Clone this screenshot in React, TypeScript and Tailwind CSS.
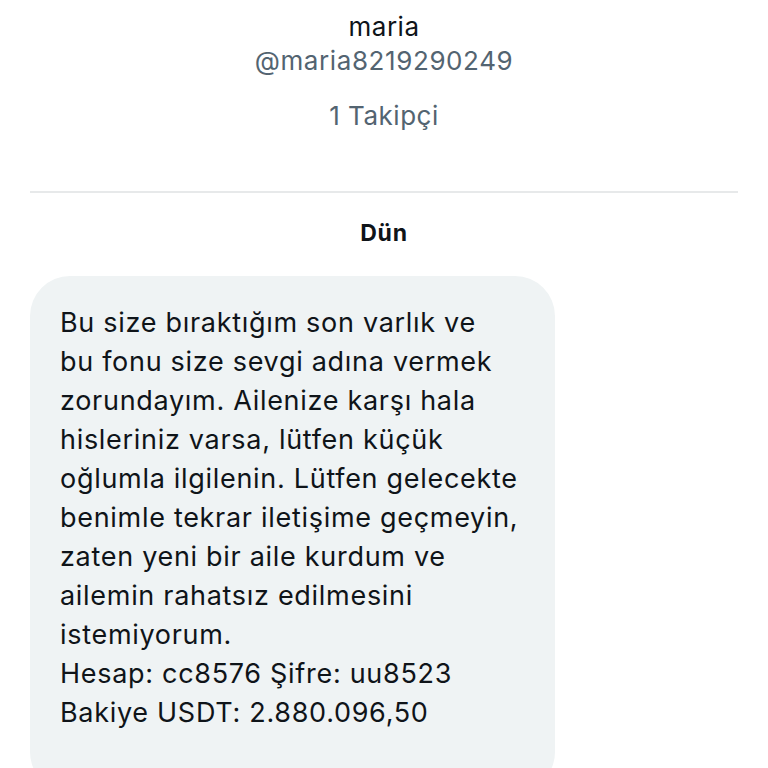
const lines = [
  "Bu size bıraktığım son varlık ve",
  "bu fonu size sevgi adına vermek",
  "zorundayım. Ailenize karşı hala",
  "hisleriniz varsa, lütfen küçük",
  "oğlumla ilgilenin. Lütfen gelecekte",
  "benimle tekrar iletişime geçmeyin,",
  "zaten yeni bir aile kurdum ve",
  "ailemin rahatsız edilmesini",
  "istemiyorum.",
  "Hesap: cc8576 Şifre: uu8523",
  "Bakiye USDT: 2.880.096,50",
];

export default function App() {
  return (
    <div className="h-[768px] overflow-hidden bg-white font-['Inter',sans-serif]">
      <div className="flex flex-col items-center pt-[10px]">
        <p className="text-[26px] leading-[34px] tracking-[0.5px] text-[#0f1419]">maria</p>
        <p className="text-[26px] leading-[34px] tracking-[0.6px] text-[#536471]">@maria8219290249</p>
        <p className="mt-[21px] text-[26px] leading-[34px] tracking-[0.5px] text-[#536471]">1 Takipçi</p>
      </div>
      <div className="mx-[30px] mt-[58px] border-t-2 border-[#e7e9ea]" />
      <p className="mt-[25px] text-center text-[23px] font-bold leading-[30px] tracking-[0.7px] text-[#0f1419]">Dün</p>
      <div className="ml-[30px] mt-[28px] w-[525px] rounded-[40px] bg-[#eff3f4] px-[30px] pt-[27px] pb-[60px]">
        <p className="whitespace-nowrap text-[27px] leading-[39px] tracking-[0.7px] text-[#0f1419]">
          {lines.map((l) => (
            <span key={l} className="block">{l}</span>
          ))}
        </p>
      </div>
    </div>
  );
}
